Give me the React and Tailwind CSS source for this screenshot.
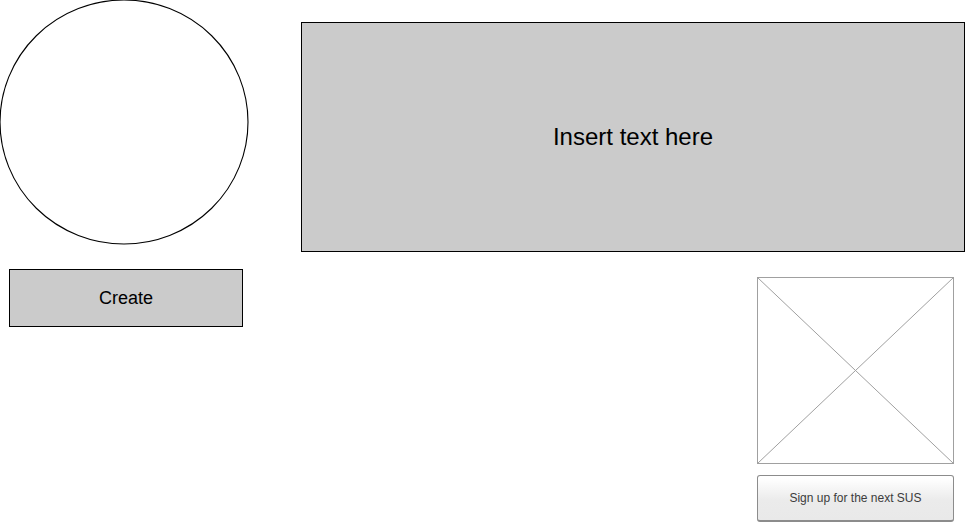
function Circle() {
  return (
    <svg className="block h-[245px] w-full" viewBox="0 0 249 245" fill="none" aria-hidden="true">
      <ellipse cx="124" cy="122" rx="124" ry="122" stroke="#000" strokeWidth="1.1" />
    </svg>
  );
}

function ImagePlaceholder() {
  return (
    <svg
      className="block h-[187px] w-full"
      viewBox="0 0 197 187"
      fill="none"
      stroke="#a0a0a0"
      role="img"
      aria-label="Image placeholder"
    >
      <rect x="0.5" y="0.5" width="196" height="186" />
      <path d="M0.5 0.5 196.5 186.5M196.5 0.5 0.5 186.5" />
    </svg>
  );
}

export default function App() {
  return (
    <main className="flex min-h-screen items-start justify-between gap-[52px] bg-white pr-[3px] font-['Liberation_Sans',Arial,sans-serif] text-black">
      <section className="flex w-[249px] shrink-0 flex-col gap-6">
        <Circle />
        <button
          type="button"
          className="ml-[9px] mr-[6px] h-[58px] border border-black bg-[#cbcbcb] text-[18px] leading-6"
        >
          Create
        </button>
      </section>

      <section className="flex min-w-0 flex-1 flex-col gap-[25px] pt-[22px]">
        <div className="flex h-[230px] items-center justify-center border border-black bg-[#cbcbcb]">
          <p className="text-2xl">Insert text here</p>
        </div>
        <div className="mr-[11px] flex w-[197px] flex-col gap-[11px] self-end">
          <ImagePlaceholder />
          <button
            type="button"
            className="h-[47px] rounded-[3px] border border-b-2 border-[#8c8c8c] bg-linear-to-b from-white from-5% via-[#ebebeb] via-55% to-[#e9e9e9] text-xs text-[#3c3c3c]"
          >
            Sign up for the next SUS
          </button>
        </div>
      </section>
    </main>
  );
}
